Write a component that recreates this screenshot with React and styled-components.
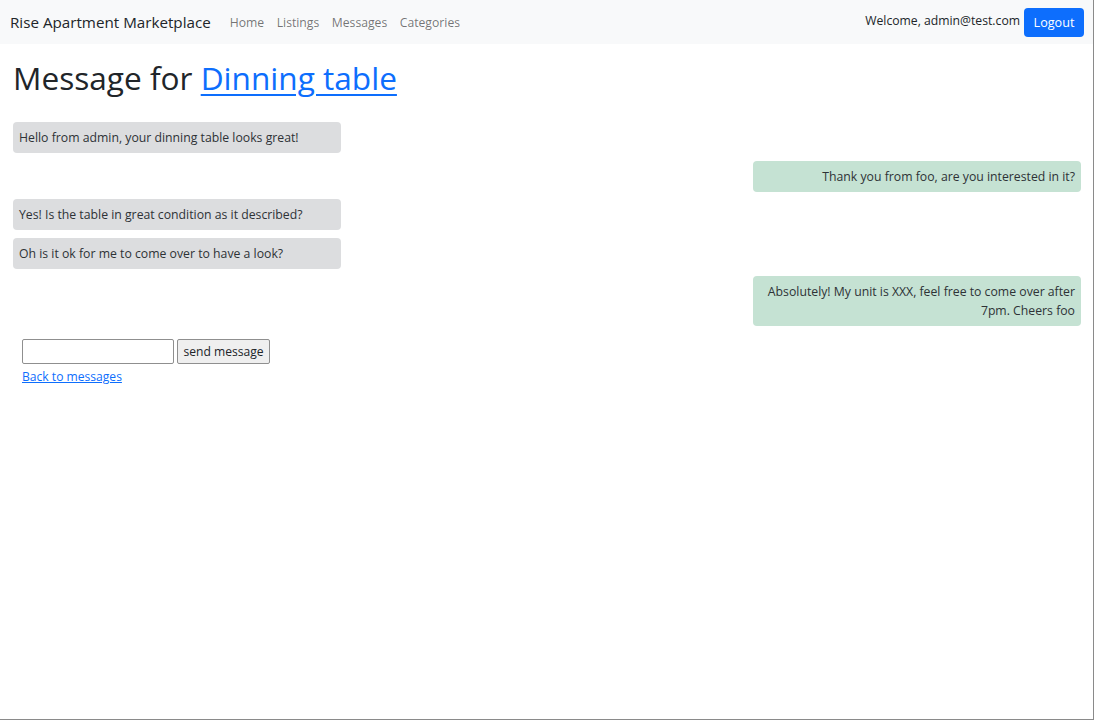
import React from "react";
import styled, { createGlobalStyle } from "styled-components";

const GlobalStyle = createGlobalStyle`
  html, body {
    margin: 0;
    padding: 0;
    background: #fff;
  }
  body {
    font-family: "Open Sans", "Noto Sans", sans-serif;
    color: #212529;
  }
  * { box-sizing: border-box; }
`;

const Page = styled.div`
  height: 720px;
  border-right: 1px solid #8a8a8a;
  border-bottom: 1px solid #8a8a8a;
  overflow: hidden;
`;

const Navbar = styled.nav`
  height: 44px;
  background: #f8f9fa;
  display: flex;
  align-items: center;
  padding: 0 9px 0 10px;
`;

const Brand = styled.a`
  font-size: 15.2px;
  color: #212529;
  text-decoration: none;
  margin-right: 19px;
`;

const NavLinks = styled.div`
  display: flex;
  gap: 12.5px;
  flex: 1;
`;

const NavLink = styled.a`
  font-size: 12.2px;
  color: rgba(0, 0, 0, 0.55);
  text-decoration: none;
`;

const Welcome = styled.span`
  font-size: 12.2px;
  color: #212529;
  margin-right: 4px;
  margin-top: -4px;
`;

const Button = styled.button`
  background: #0d6efd;
  color: #fff;
  border: none;
  border-radius: 4px;
  width: 60px;
  height: 29px;
  padding: 0;
  font-family: inherit;
  font-size: 12.6px;
`;

const Main = styled.main`
  padding: 0 12px 0 13px;
`;

const Title = styled.h1`
  font-size: 31.6px;
  font-weight: 500;
  margin: 15px 0 25px;
  line-height: 1.2;

  a {
    color: #0d6efd;
    text-decoration: underline;
    text-decoration-thickness: 2px;
    text-underline-offset: 4px;
  }
`;

const Thread = styled.div`
  display: flex;
  flex-direction: column;
  gap: 7.6px;
`;

const Bubble = styled.div`
  width: 328px;
  align-self: ${(p) => (p.mine ? "flex-start" : "flex-end")};
  text-align: ${(p) => (p.mine ? "left" : "right")};
  background: ${(p) => (p.mine ? "#dcdddf" : "#c5e2d3")};
  color: #2e3236;
  border-radius: 4px;
  padding: 6px;
  font-size: 12.25px;
  line-height: 19px;
`;

const Form = styled.form`
  margin: 13px 0 0 22px;
  display: flex;
  gap: 3px;
`;

const Input = styled.input`
  width: 152px;
  height: 25px;
  border: 1px solid #8f8f8f;
  border-radius: 2px;
`;

const Send = styled.button`
  height: 25px;
  width: 93px;
  padding: 0;
  border: 1px solid #8f8f8f;
  border-radius: 2px;
  background: #efefef;
  font-family: inherit;
  font-size: 12.1px;
  color: #212529;
`;

const BackLink = styled.a`
  display: inline-block;
  margin: 0 0 0 22px;
  font-size: 12.1px;
  color: #0d6efd;
  text-decoration: underline;
`;

const messages = [
  { mine: true, text: "Hello from admin, your dinning table looks great!" },
  { mine: false, text: "Thank you from foo, are you interested in it?" },
  { mine: true, text: "Yes! Is the table in great condition as it described?" },
  { mine: true, text: "Oh is it ok for me to come over to have a look?" },
  {
    mine: false,
    text: "Absolutely! My unit is XXX, feel free to come over after 7pm. Cheers foo",
  },
];

export default function App() {
  return (
    <Page>
      <GlobalStyle />
      <Navbar>
        <Brand href="#">Rise Apartment Marketplace</Brand>
        <NavLinks>
          <NavLink href="#">Home</NavLink>
          <NavLink href="#">Listings</NavLink>
          <NavLink href="#">Messages</NavLink>
          <NavLink href="#">Categories</NavLink>
        </NavLinks>
        <Welcome>Welcome, admin@test.com</Welcome>
        <Button>Logout</Button>
      </Navbar>
      <Main>
        <Title>
          Message for <a href="#">Dinning table</a>
        </Title>
        <Thread>
          {messages.map((m, i) => (
            <Bubble key={i} mine={m.mine}>
              {m.text}
            </Bubble>
          ))}
        </Thread>
      </Main>
      <Form onSubmit={(e) => e.preventDefault()}>
        <Input type="text" />
        <Send type="submit">send message</Send>
      </Form>
      <BackLink href="#">Back to messages</BackLink>
    </Page>
  );
}
